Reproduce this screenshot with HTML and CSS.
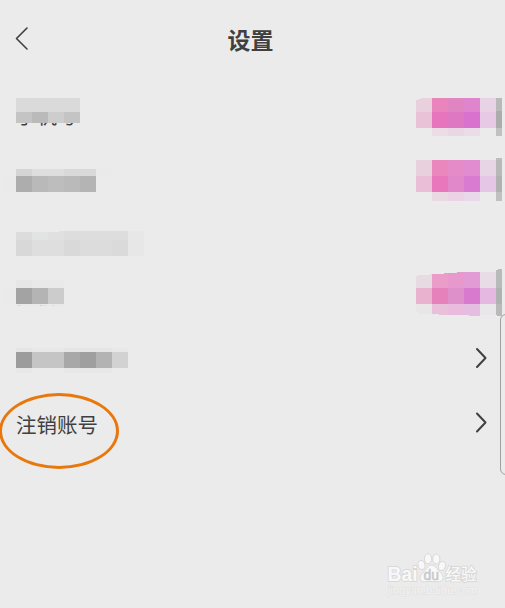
FILE: index.html
```html
<!DOCTYPE html>
<html lang="zh-CN">
<head>
    <meta charset="UTF-8">
    <meta name="viewport" content="width=device-width, initial-scale=1.0">
    <title>设置</title>
    <link rel="stylesheet" href="styles.css">
</head>
<body>
    <div class="page">
        <header class="header">
            <svg class="back" width="16" height="26" viewBox="14 25 16 26">
                <path d="M27 28 L16.5 38.5 L27 49"/>
            </svg>
            <h1>设置</h1>
        </header>

        <main class="settings">
            <div class="row row-phone">
                <svg class="mask" width="160" height="68" viewBox="0 80 160 68">
                    <text class="masked-text" x="16" y="124">手机号</text>
                    <path fill="#dadada" d="M16 98h64v14h-64z"/>
                    <path fill="#c4c4c4" d="M16 112h16v11h-16z"/>
                    <path fill="#bababa" d="M32 112h16v11h-16z"/>
                    <path fill="#cdcdcd" d="M48 112h16v11h-16z"/>
                    <path fill="#c4c4c4" d="M64 112h16v11h-16z"/>
                </svg>
                <svg class="mask" width="100" height="68" viewBox="405 80 100 68">
                    <path fill="#e8d0dd" d="M416 100h2v-1h3v-1h11v14h-16z"/>
                    <path fill="#e984bc" d="M432 98h16v14h-16z"/>
                    <path fill="#e184c2" d="M448 98h16v14h-16z"/>
                    <path fill="#de85cd" d="M464 98h16v14h-16z"/>
                    <path fill="#e8d3e6" d="M480 98h16v14h-16z"/>
                    <path fill="#b9b9b9" d="M496 98h6v13h-6z"/>
                    <path fill="#e9c2d8" d="M416 112h16v16h-16z"/>
                    <path fill="#e775bd" d="M432 112h16v16h-16z"/>
                    <path fill="#df78c2" d="M448 112h16v16h-16z"/>
                    <path fill="#d972cf" d="M464 112h16v16h-16z"/>
                    <path fill="#e7c9e6" d="M480 112h16v16h-16z"/>
                    <path fill="#acacac" d="M496 111h6v17h-6z"/>
                    <path fill="#ebdce5" d="M432 128h16v8h-16z"/>
                    <path fill="#ead7e5" d="M448 128h16v8h-16z"/>
                    <path fill="#eadde9" d="M464 128h16v8h-16z"/>
                    <path fill="#c1c1c1" d="M496 128h6v8h-6z"/>
                </svg>
            </div>

            <div class="row row-second">
                <svg class="mask" width="160" height="64" viewBox="0 148 160 64">
                    <path fill="#d5d5d5" d="M16 169h16v7h-16z"/>
                    <path fill="#dedede" d="M32 169h32v7h-32z"/>
                    <path fill="#d9d9d9" d="M64 169h32v7h-32z"/>
                    <path fill="#adadad" d="M16 176h16v16h-16z"/>
                    <path fill="#b9b9b9" d="M32 176h16v16h-16z"/>
                    <path fill="#bdbdbd" d="M48 176h16v16h-16z"/>
                    <path fill="#bababa" d="M64 176h16v16h-16z"/>
                    <path fill="#b4b4b4" d="M80 176h16v16h-16z"/>
                    <path fill="#eaeaea" d="M3 176h13v16h-13zM96 169h16v7h-16z"/>
                </svg>
                <svg class="mask" width="100" height="64" viewBox="405 148 100 64">
                    <path fill="#e9d0dd" d="M416 160h16v16h-16z"/>
                    <path fill="#ea87bc" d="M432 160h16v16h-16z"/>
                    <path fill="#e58bc7" d="M448 160h16v16h-16z"/>
                    <path fill="#e18cd0" d="M464 160h16v16h-16z"/>
                    <path fill="#e7d5e5" d="M480 160h16v16h-16z"/>
                    <path fill="#bebebe" d="M496 158h6v2h-6z"/>
                    <path fill="#b8b8b8" d="M496 160h6v16h-6z"/>
                    <path fill="#eabed6" d="M416 176h16v16h-16z"/>
                    <path fill="#e877bc" d="M432 176h16v16h-16z"/>
                    <path fill="#e088c9" d="M448 176h16v16h-16z"/>
                    <path fill="#d97bd0" d="M464 176h16v16h-16z"/>
                    <path fill="#e6c6e6" d="M480 176h16v16h-16z"/>
                    <path fill="#b1b1b1" d="M496 176h6v16h-6z"/>
                    <path fill="#ead8e3" d="M432 192h16v9h-16z"/>
                    <path fill="#ebd3e5" d="M448 192h16v9h-16z"/>
                    <path fill="#e8d8e9" d="M464 192h16v9h-16z"/>
                    <path fill="#c0c0c0" d="M496 192h6v9h-6z"/>
                </svg>
            </div>

            <div class="row row-third">
                <svg class="mask" width="160" height="52" viewBox="0 212 160 52">
                    <path fill="#dcdcdc" d="M16 232h16v8h-16z"/>
                    <path fill="#e1e4e3" d="M32 232h16v8h-16z"/>
                    <path fill="#e0e0e0" d="M48 232h11v-1h5v9h-16z"/>
                    <path fill="#dddddd" d="M64 231h64v9h-64z"/>
                    <path fill="#e7e7e7" d="M128 231h16v25h-16z"/>
                    <path fill="#d8d8d8" d="M16 240h16v16h-16z"/>
                    <path fill="#dedede" d="M32 240h32v16h-32z"/>
                    <path fill="#d9d9d9" d="M64 240h16v16h-16z"/>
                    <path fill="#dcdcdc" d="M80 240h32v16h-32z"/>
                    <path fill="#dadada" d="M112 240h16v16h-16z"/>
                </svg>
            </div>

            <div class="row row-fourth">
                <svg class="mask" width="160" height="63" viewBox="0 264 160 63">
                    <path fill="#e6e6e6" d="M16 280h16v8h-16z"/>
                    <path fill="#e9e9e9" d="M32 280h32v8h-32zM16 304h48v2h-48z"/>
                    <path fill="#eaeaea" d="M3 288h13v16h-13z"/>
                    <path fill="#a3a3a3" d="M16 288h16v16h-16z"/>
                    <path fill="#b4b4b4" d="M32 288h16v16h-16z"/>
                    <path fill="#cccccc" d="M48 288h16v16h-16z"/>
                    <path fill="#cfcfcf" d="M18 305h2v1h-2zM40 305h2v1h-2zM44 305h1v1h-1zM53 305h1v1h-1z"/>
                </svg>
                <svg class="mask" width="100" height="63" viewBox="405 264 100 63">
                    <path fill="#e8dae2" d="M416 276h2v-1h12v-1h2v14h-16z"/>
                    <path fill="#ea9dc8" d="M432 274h12v-1h4v15h-16z"/>
                    <path fill="#e799cd" d="M448 273h9v-1h7v16h-16z"/>
                    <path fill="#e29bd5" d="M464 272h16v16h-16z"/>
                    <path fill="#e8dde6" d="M480 272h16v16h-16z"/>
                    <path fill="#b9bbba" d="M496 270h2v-1h4v19h-6z"/>
                    <path fill="#e9b3d0" d="M416 288h16v16h-16z"/>
                    <path fill="#e681bc" d="M432 288h16v16h-16z"/>
                    <path fill="#de90ca" d="M448 288h16v16h-16z"/>
                    <path fill="#d87ace" d="M464 288h16v16h-16z"/>
                    <path fill="#e4b8e1" d="M480 288h16v16h-16z"/>
                    <path fill="#b0b2b1" d="M496 288h6v16h-6z"/>
                    <path fill="#e8e6e7" d="M416 304h16v10h-12l-4-3z"/>
                    <path fill="#e9c0d9" d="M432 304h16v11h-9v-1h-7z"/>
                    <path fill="#e9bcdd" d="M448 304h16v11h-16z"/>
                    <path fill="#e4bde1" d="M464 304h16v12h-11v-1h-5z"/>
                    <path fill="#e9e7e9" d="M480 304h16v11h-16z"/>
                    <path fill="#b9bbba" d="M496 304h6v12h-5v-1h-1z"/>
                </svg>
            </div>

            <div class="row row-fifth">
                <svg class="mask" width="160" height="64" viewBox="0 327 160 64">
                    <path fill="#e5e5e5" d="M16 348h16v4h-16zM64 348h48v4h-48z"/>
                    <path fill="#e8e8e8" d="M32 348h32v4h-32zM112 348h16v4h-16zM16 368h16v5h-16zM64 368h48v5h-48z"/>
                    <path fill="#9c9c9c" d="M16 352h16v16h-16z"/>
                    <path fill="#c5c5c5" d="M32 352h32v16h-32z"/>
                    <path fill="#a8a8a8" d="M64 352h16v16h-16z"/>
                    <path fill="#9f9f9f" d="M80 352h16v16h-16z"/>
                    <path fill="#b3b3b3" d="M96 352h16v16h-16z"/>
                    <path fill="#d2d2d2" d="M112 352h16v16h-16z"/>
                </svg>
                <svg class="arrow" width="14" height="26" viewBox="0 0 14 26">
                    <path d="M3 3 L11.5 12 L3 21"/>
                </svg>
            </div>

            <div class="row row-cancel">
                <span class="label">注销账号</span>
                <svg class="arrow" width="14" height="26" viewBox="0 0 14 26">
                    <path d="M3 3.5 L11.5 12.5 L3 21.5"/>
                </svg>
                <div class="circle-mark"></div>
            </div>
        </main>

        <div class="side-handle"></div>

        <footer class="footer">
            <svg class="watermark" width="110" height="50" viewBox="380 550 110 50">
                <g class="wm-shape">
                    <ellipse cx="421.5" cy="565" rx="3.4" ry="4.6" transform="rotate(-15 421.5 565)"/>
                    <ellipse cx="428" cy="558.8" rx="3.6" ry="5"/>
                    <ellipse cx="436.3" cy="559" rx="3.6" ry="5"/>
                    <ellipse cx="442" cy="566" rx="3.4" ry="4.6" transform="rotate(15 442 566)"/>
                    <path d="M431.5 565c3.5 0 5 3 7 5.5 3 3 5 4.5 4.5 8-1 3.8-5 3.5-8 3h-7c-3 .5-7 1-8-3-.3-3.5 2.5-5 5-8 2-2.5 3-5.5 6.500-5.500z"/>
                </g>
                <text class="wm-text wm-bai" x="387.5" y="581" textLength="30" lengthAdjust="spacingAndGlyphs">Bai</text>
                <text class="wm-du" x="423.5" y="579.5" textLength="15.5" lengthAdjust="spacingAndGlyphs">du</text>
                <text class="wm-text wm-cn" x="445.5" y="580">经验</text>
                <text class="wm-text wm-url" x="388" y="593.5" textLength="89" lengthAdjust="spacingAndGlyphs">jingyan.baidu.com</text>
            </svg>
        </footer>
    </div>
</body>
</html>
```

FILE: styles.css
```css
* {
    margin: 0;
    padding: 0;
    box-sizing: border-box;
}

body {
    font-family: 'Noto Sans CJK SC', 'Noto Sans', sans-serif;
    background: #ebebeb;
    color: #404040;
    overflow: hidden;
}

.page {
    position: relative;
    width: 505px;
    height: 608px;
    display: flex;
    flex-direction: column;
    overflow: hidden;
}

.header {
    height: 80px;
    display: grid;
    grid-template-columns: 30px 1fr 48px;
    align-items: center;
    padding-left: 14px;
}

.header h1 {
    font-size: 23px;
    font-weight: 700;
    line-height: 34px;
    text-align: center;
    margin-bottom: 2px;
}

.back,
.arrow {
    fill: none;
    stroke: #404040;
    stroke-width: 1.6;
    stroke-linecap: round;
    stroke-linejoin: round;
}

.back {
    margin-bottom: 4px;
}

.arrow {
    stroke-width: 2;
    margin-right: 17px;
}

.row {
    display: flex;
    justify-content: space-between;
    align-items: center;
}

.row-phone {
    height: 68px;
}

.row-second {
    height: 64px;
}

.row-third {
    height: 52px;
}

.row-fourth {
    height: 63px;
}

.row-fifth {
    height: 64px;
}

.row-cancel {
    position: relative;
    height: 64px;
    padding-left: 16px;
}

/* blurred out account details */
.mask {
    display: block;
    shape-rendering: crispEdges;
}

.masked-text {
    font-size: 20.5px;
    fill: #404040;
}

.label {
    font-size: 20.5px;
    line-height: 30px;
    padding-top: 2px;
}

.circle-mark {
    position: absolute;
    left: -1px;
    top: 2px;
    width: 120px;
    height: 76px;
    border: 3px solid #e8780c;
    border-radius: 50%;
}

.side-handle {
    position: absolute;
    left: 500px;
    top: 314px;
    width: 12px;
    height: 161px;
    border: 1px solid #a0a0a0;
    border-radius: 6px;
    background: #ebebeb;
}

.footer {
    display: flex;
    justify-content: flex-end;
    margin-top: auto;
    padding: 0 15px 8px 0;
}

.wm-shape {
    fill: #f8f8f8;
    stroke: #d8d8d8;
    stroke-width: 1;
}

.wm-text {
    fill: #f8f8f8;
    stroke: #d8d8d8;
    stroke-width: 1.8;
    paint-order: stroke;
}

.wm-bai,
.wm-du {
    font-family: 'Liberation Sans', Arial, sans-serif;
}

.wm-bai {
    font-size: 19.5px;
    font-weight: 700;
}

.wm-du {
    font-size: 14px;
    fill: #c8c8c8;
    stroke: #c8c8c8;
    stroke-width: 0.5;
}

.wm-cn {
    font-size: 15.5px;
    font-weight: 500;
}

.wm-url {
    font-family: 'Liberation Sans', Arial, sans-serif;
    font-size: 11px;
    fill: #f4f4f4;
    stroke: #e0e0e0;
    stroke-width: 1;
}
```
